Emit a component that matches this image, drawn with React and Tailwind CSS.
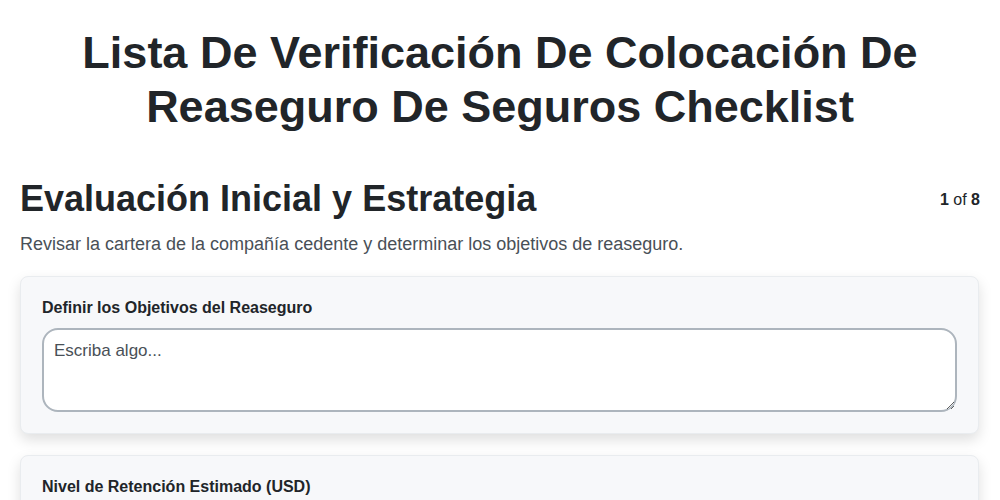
import { useState } from 'react'

function Field({ label, children }) {
  return (
    <div className="rounded-lg border border-[#e9ecef] bg-[#f7f8fa] px-[21px] pt-[19px] pb-[21px] shadow-[0_6px_14px_rgba(0,0,0,0.13)]">
      <label className="block text-[16px] font-bold leading-[24px] text-[#212529] mb-[8px]">{label}</label>
      {children}
    </div>
  )
}

export default function App() {
  const [objetivos, setObjetivos] = useState('')

  return (
    <div className="min-h-screen bg-white text-[#212529]" style={{ fontFamily: '"Liberation Sans", Arial, sans-serif' }}>
      <h1 className="pt-[26px] px-10 text-center text-[45px] font-bold leading-[54px] text-[#212529]">
        Lista De Verificación De Colocación De Reaseguro De Seguros Checklist
      </h1>

      <div className="px-5 mt-[43px]">
        <div className="flex items-start justify-between">
          <h2 className="text-[36px] font-bold leading-[44px] text-[#212529]">Evaluación Inicial y Estrategia</h2>
          <div className="mt-[11px] text-[16px] text-[#212529]">
            <span className="font-bold">1</span> of <span className="font-bold">8</span>
          </div>
        </div>
        <p className="mt-[10px] text-[18px] leading-[26px] text-[#495057]">
          Revisar la cartera de la compañía cedente y determinar los objetivos de reaseguro.
        </p>

        <div className="mt-[19px] mr-[1px] flex flex-col gap-[21px]">
          <Field label="Definir los Objetivos del Reaseguro">
            <textarea
              value={objetivos}
              onChange={e => setObjetivos(e.target.value)}
              placeholder="Escriba algo..."
              className="block w-full h-[84px] rounded-2xl border-2 border-[#adb5bd] bg-white px-[10px] py-[10px] text-[17px] leading-[22px] text-[#212529] placeholder:text-[#495057] outline-none"
            />
          </Field>
          <Field label="Nivel de Retención Estimado (USD)">
            <input
              type="number"
              placeholder="0"
              className="block w-full h-[48px] rounded-2xl border-2 border-[#adb5bd] bg-white px-[10px] text-[17px] text-[#212529] placeholder:text-[#495057] outline-none"
            />
          </Field>
        </div>
      </div>
    </div>
  )
}
